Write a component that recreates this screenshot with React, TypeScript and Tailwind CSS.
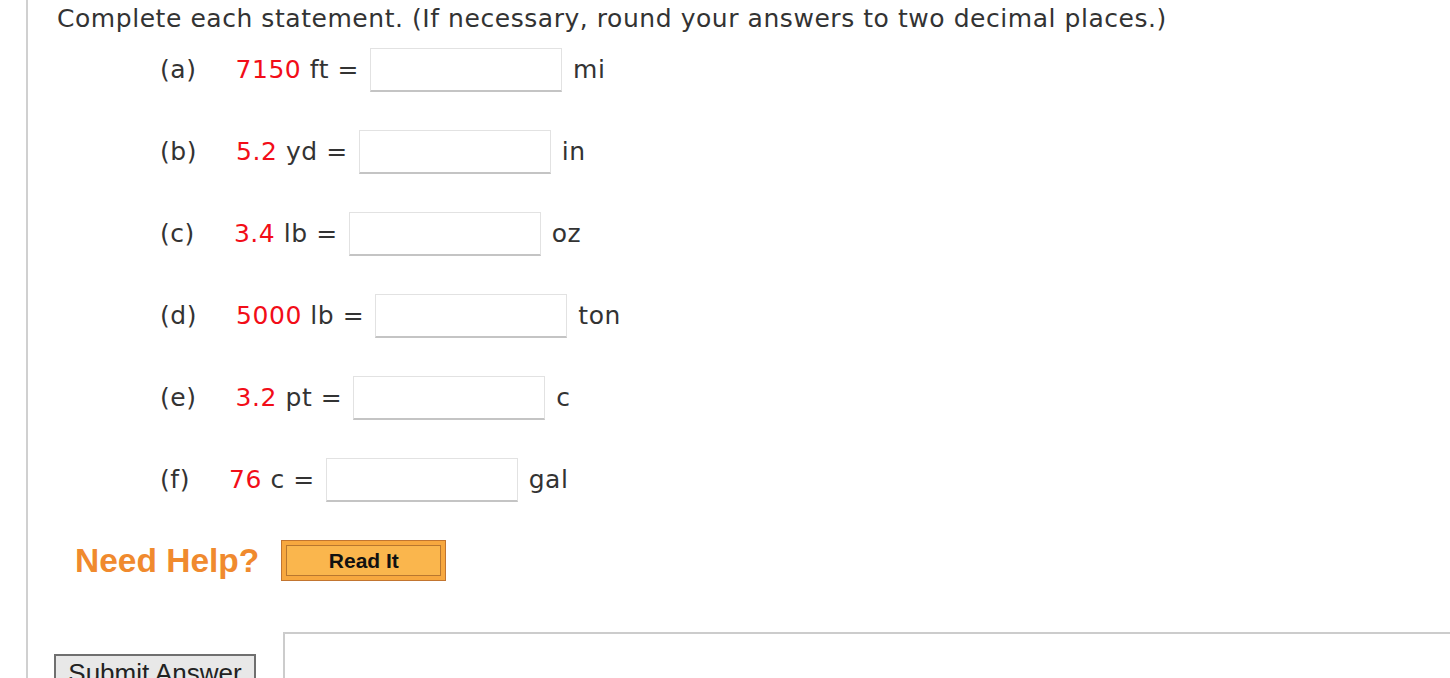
import React from "react";

const rows = [
  { label: "(a)", value: "7150", unit1: "ft", unit2: "mi" },
  { label: "(b)", value: "5.2", unit1: "yd", unit2: "in" },
  { label: "(c)", value: "3.4", unit1: "lb", unit2: "oz" },
  { label: "(d)", value: "5000", unit1: "lb", unit2: "ton" },
  { label: "(e)", value: "3.2", unit1: "pt", unit2: "c" },
  { label: "(f)", value: "76", unit1: "c", unit2: "gal" },
];

export default function App() {
  return (
    <div className="h-[678px] w-[1450px] overflow-hidden bg-white">
      <div
        className="ml-[26px] min-h-[678px] border-l-2 border-[#d0d0d0] pl-[29px] text-[#333333]"
        style={{ fontFamily: '"DejaVu Sans", Verdana, sans-serif' }}
      >
        <p className="whitespace-nowrap pt-[3px] text-[25px] leading-[32px] tracking-[0.55px]">
          Complete each statement. (If necessary, round your answers to two decimal places.)
        </p>
        <div className="mt-[13px] flex flex-col gap-[38px] pl-[103px]">
          {rows.map((r) => (
            <div key={r.label} className="flex h-[44px] items-center text-[25px] tracking-[0.55px]">
              <span>{r.label}</span>
              <span className="ml-[39px]">
                <span className="text-[#f20d18]">{r.value}</span> {r.unit1} =
              </span>
              <div className="ml-[11px] h-[44px] w-[192px] shrink-0 border border-b-2 border-[#e2e2e2] border-b-[#c4c4c4] bg-white" />
              <span className="ml-[11px]">{r.unit2}</span>
            </div>
          ))}
        </div>
        <div
          className="mt-[38px] flex items-center pl-[18px]"
          style={{ fontFamily: '"Liberation Sans", Arial, sans-serif' }}
        >
          <span className="text-[33.5px] font-bold leading-[40px] text-[#f08a2e]">Need Help?</span>
          <div className="ml-[22px] h-[41px] w-[165px] shrink-0 border border-[#c27530] bg-[#f7a83f] p-[4px]">
            <div className="flex h-full w-full items-center justify-center border border-[#b8772f] bg-[#fab64d] text-[21px] font-bold text-[#111111]">
              Read It
            </div>
          </div>
        </div>
        <div className="mt-[51px] flex items-start">
          <div
            className="-ml-[3px] mt-[22px] flex h-[40px] w-[202px] shrink-0 items-start justify-center border-2 border-[#6f6f6f] bg-[#e8e8e8] pt-[2px] text-[26px] leading-[30px] text-[#222222]"
            style={{ fontFamily: '"Liberation Sans", Arial, sans-serif' }}
          >
            Submit Answer
          </div>
          <div className="ml-[27px] h-[100px] w-[1200px] shrink-0 border-l-2 border-t-2 border-[#cccccc]" />
        </div>
      </div>
    </div>
  );
}
